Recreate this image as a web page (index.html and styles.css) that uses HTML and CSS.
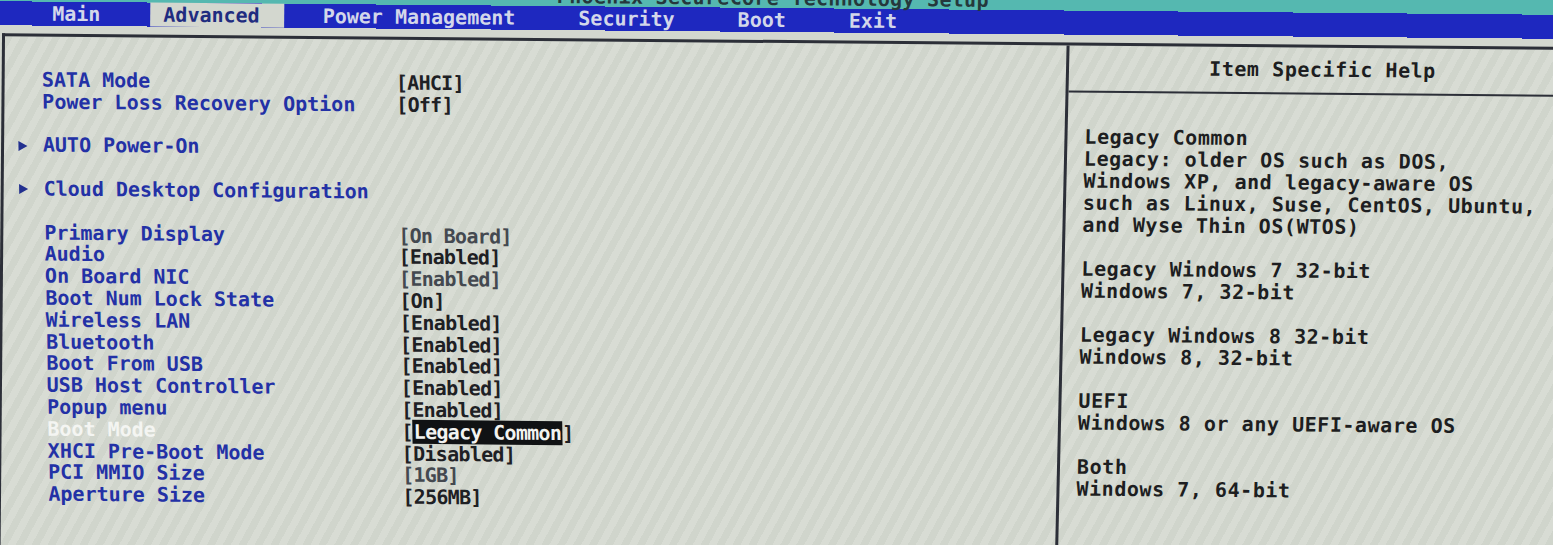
FILE: index.html
```html
<!DOCTYPE html>
<html lang="en">
<head>
<meta charset="utf-8">
<title>Phoenix SecureCore Technology Setup - Advanced</title>
<link rel="stylesheet" href="styles.css">
</head>
<body>
<div class="screen">
  <header class="titlebar"><span class="title">Phoenix SecureCore Technology Setup</span></header>
  <nav class="tabs">
    <span class="tab">Main</span>
    <span class="tab active">Advanced</span>
    <span class="tab">Power Management</span>
    <span class="tab">Security</span>
    <span class="tab">Boot</span>
    <span class="tab">Exit</span>
  </nav>
  <div class="spacer"></div>
  <main class="frame">
    <section class="settings">
      <div class="row"><span class="mark"></span><span class="label">SATA Mode</span><span class="value">[AHCI]</span></div>
      <div class="row"><span class="mark"></span><span class="label">Power Loss Recovery Option</span><span class="value">[Off]</span></div>
      <div class="row"></div>
      <div class="row"><span class="mark"><svg width="10" height="11" viewBox="0 0 10 11"><path d="M0.5 0.5 L9.5 5.5 L0.5 10.5 Z" fill="#22308f"/></svg></span><span class="label">AUTO Power-On</span><span class="value"></span></div>
      <div class="row"></div>
      <div class="row"><span class="mark"><svg width="10" height="11" viewBox="0 0 10 11"><path d="M0.5 0.5 L9.5 5.5 L0.5 10.5 Z" fill="#22308f"/></svg></span><span class="label">Cloud Desktop Configuration</span><span class="value"></span></div>
      <div class="row"></div>
      <div class="row"><span class="mark"></span><span class="label">Primary Display</span><span class="value dim">[On Board]</span></div>
      <div class="row"><span class="mark"></span><span class="label">Audio</span><span class="value">[Enabled]</span></div>
      <div class="row"><span class="mark"></span><span class="label">On Board NIC</span><span class="value dim">[Enabled]</span></div>
      <div class="row"><span class="mark"></span><span class="label">Boot Num Lock State</span><span class="value">[On]</span></div>
      <div class="row"><span class="mark"></span><span class="label">Wireless LAN</span><span class="value">[Enabled]</span></div>
      <div class="row"><span class="mark"></span><span class="label">Bluetooth</span><span class="value">[Enabled]</span></div>
      <div class="row"><span class="mark"></span><span class="label">Boot From USB</span><span class="value">[Enabled]</span></div>
      <div class="row"><span class="mark"></span><span class="label">USB Host Controller</span><span class="value">[Enabled]</span></div>
      <div class="row"><span class="mark"></span><span class="label">Popup menu</span><span class="value">[Enabled]</span></div>
      <div class="row selected"><span class="mark"></span><span class="label">Boot Mode</span><span class="value">[<span class="hl">Legacy Common</span>]</span></div>
      <div class="row"><span class="mark"></span><span class="label">XHCI Pre-Boot Mode</span><span class="value">[Disabled]</span></div>
      <div class="row"><span class="mark"></span><span class="label">PCI MMIO Size</span><span class="value dim">[1GB]</span></div>
      <div class="row"><span class="mark"></span><span class="label">Aperture Size</span><span class="value">[256MB]</span></div>
    </section>
    <aside class="help">
      <div class="help-title">Item Specific Help</div>
      <div class="help-body">
        <p>Legacy Common<br>Legacy: older OS such as DOS,<br>Windows XP, and legacy-aware OS<br>such as Linux, Suse, CentOS, Ubuntu,<br>and Wyse Thin OS(WTOS)</p>
        <p>Legacy Windows 7 32-bit<br>Windows 7, 32-bit</p>
        <p>Legacy Windows 8 32-bit<br>Windows 8, 32-bit</p>
        <p>UEFI<br>Windows 8 or any UEFI-aware OS</p>
        <p>Both<br>Windows 7, 64-bit</p>
      </div>
    </aside>
  </main>
</div>
</body>
</html>
```

FILE: styles.css
```css
html, body {
  margin: 0;
  padding: 0;
}

body {
  width: 1553px;
  height: 545px;
  overflow: hidden;
  background: #d3d7cf;
  font-family: "DejaVu Sans Mono", "Liberation Mono", monospace;
  font-weight: bold;
  font-size: 20px;
}

.screen {
  box-sizing: border-box;
  height: 600px;
  margin: -20px -30px 0 -24px;
  padding: 0 30px 0 24px;
  display: flex;
  flex-direction: column;
  transform: rotate(0.5deg);
  transform-origin: 800px 292px;
  background:
    linear-gradient(to bottom, #55b8b0 0, #55b8b0 28px, #1e28bf 28px, #1e28bf 52px, #d3d7cf 52px);
}

.titlebar {
  height: 28px;
  box-sizing: border-box;
  padding-top: 7px;
  display: flex;
  justify-content: center;
}

.title {
  line-height: 22px;
  color: #25383c;
  letter-spacing: 0.3px;
  margin-left: -12px;
}

.tabs {
  height: 24px;
  display: flex;
  gap: 26px;
  padding-left: 37px;
}

.tab {
  line-height: 24px;
  padding: 0 24px 0 13px;
  color: #d3d7ea;
}

.tab.active {
  background: #d3d7cf;
  color: #1f2c80;
}

.spacer {
  height: 8px;
}

.frame {
  flex: 1;
  display: flex;
  margin-right: -30px;
  border-top: 3px solid #2c2f38;
  border-left: 3px solid #2c2f38;
  background:
    repeating-linear-gradient(118deg, #d0d5cc 0, #d0d5cc 7px, #d8dcd4 7px, #d8dcd4 14px);
}

.settings {
  width: 1058px;
  box-sizing: border-box;
  padding: 33px 0 0 17px;
  transform: skewX(1.4deg);
  transform-origin: 0 237px;
}

.row {
  height: 21.8px;
  display: grid;
  grid-template-columns: 25px 354px 1fr;
  align-items: center;
  line-height: 21.8px;
}

.mark {
  display: flex;
  align-items: center;
}

.label {
  color: #2331a6;
  white-space: nowrap;
}

.value {
  color: #1e2024;
  letter-spacing: -0.7px;
  white-space: nowrap;
}

.value.dim {
  color: #444950;
}

.selected .label {
  color: #f4f5f2;
}

.hl {
  background: #101214;
  color: #f2f3f0;
  padding: 0 1px;
}

.help {
  flex: 1;
  border-left: 3px solid #2c2f38;
  display: flex;
  flex-direction: column;
  color: #1d1e21;
  letter-spacing: 0.55px;
  transform: skewX(-0.8deg);
  transform-origin: 0 257px;
}

.help-title {
  height: 45px;
  line-height: 45px;
  text-align: center;
  border-bottom: 2px solid #2c2f38;
  padding-right: 12px;
}

.help-body {
  padding: 33px 0 0 17px;
}

.help-body p {
  margin: 0 0 22px 0;
  line-height: 22px;
  white-space: nowrap;
}
```
